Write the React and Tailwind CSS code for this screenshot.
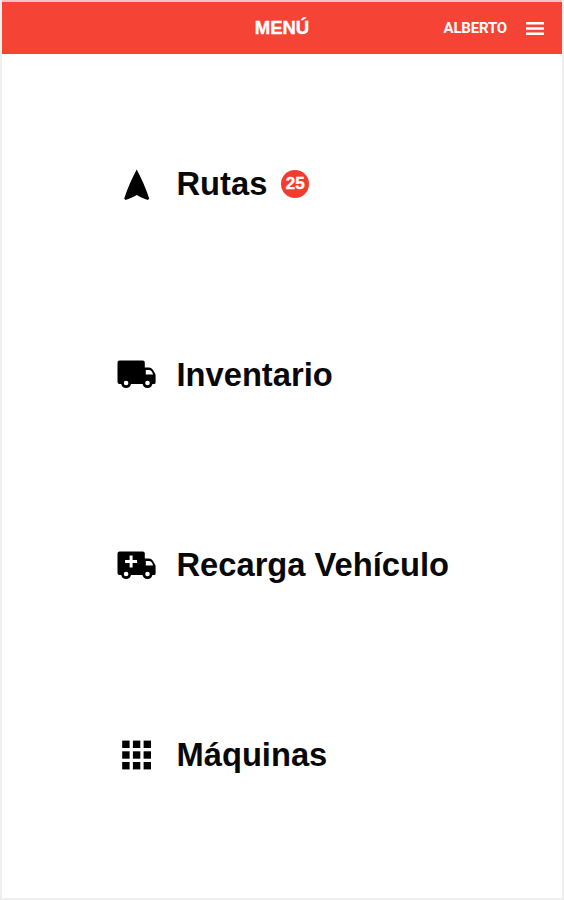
const TRUCK_BODY =
  "M3.500 6.700H26.800Q28.800 6.700 28.800 8.700V13.600H32.300C35.500 13.600 37 15.500 38.200 18L39.600 20.800V28.500Q39.600 30 38.100 30H36.400A5 5 0 0 1 26.600 30H15A5 5 0 0 1 5.200 30H3.500Q1.500 30 1.500 28V8.700Q1.500 6.700 3.500 6.700ZM29.800 16.200V20.500H37.200L35.800 17.700Q35 16.200 33.300 16.200ZM10.100 26.800A2.300 2.300 0 1 0 10.100 31.400A2.300 2.300 0 1 0 10.100 26.800ZM31.500 26.800A2.300 2.300 0 1 0 31.500 31.400A2.300 2.300 0 1 0 31.500 26.800Z";

const CROSS = "M13.600 10.600H16.600V15.100H21.100V18.100H16.600V22.600H13.600V18.100H9.100V15.100H13.600Z";

function NavigateIcon({ className }) {
  return (
    <svg viewBox="0 0 42 42" fill="currentColor" className={className}>
      <path d="M20.700 6.500C25.300 15 29.800 25 33.200 35.600L32 37C28 35.800 24 34 20.700 32C17.400 34 13.400 35.800 9.400 37L8.200 35.600C11.600 25 16.100 15 20.700 6.500Z" />
    </svg>
  );
}

function TruckIcon({ className }) {
  return (
    <svg viewBox="0 -0.9 42 42" fill="currentColor" fillRule="evenodd" className={className}>
      <path d={TRUCK_BODY} />
    </svg>
  );
}

function RefillTruckIcon({ className }) {
  return (
    <svg viewBox="0 -0.9 42 42" fill="currentColor" fillRule="evenodd" className={className}>
      <path d={TRUCK_BODY + CROSS} />
    </svg>
  );
}

function GridIcon({ className }) {
  return (
    <svg viewBox="0 0 42 42" fill="currentColor" className={className}>
      {[6.600, 17.300, 28].map((y) =>
        [6.200, 16.900, 27.600].map((x) => (
          <rect key={`${x}-${y}`} x={x} y={y} width="7.400" height="7.400" />
        ))
      )}
    </svg>
  );
}

function MenuIcon({ className }) {
  return (
    <svg viewBox="0 0 18 13" fill="currentColor" className={className}>
      <path d="M0 0h18v2.500H0zM0 5.250h18v2.500H0zM0 10.500h18V13H0z" />
    </svg>
  );
}

const items = [
  { label: "Rutas", icon: NavigateIcon, badge: 25 },
  { label: "Inventario", icon: TruckIcon },
  { label: "Recarga Vehículo", icon: RefillTruckIcon },
  { label: "Máquinas", icon: GridIcon },
];

export default function App() {
  return (
    <div className="flex h-[900px] w-[564px] flex-col border-x-2 border-b-2 border-[#efefef] bg-white font-['Liberation_Sans',Arial,sans-serif]">
      <header className="grid h-[54px] shrink-0 grid-cols-[1fr_auto_1fr] items-center border-t-2 border-[#f5c4c0] bg-[#f54336] text-white">
        <h1 className="col-start-2 text-[18.500px] font-bold [-webkit-text-stroke:0.4px_white]">
          MENÚ
        </h1>
        <div className="flex items-center justify-end gap-[19px] pr-[18px]">
          <span className="font-[Roboto,sans-serif] text-[15px] font-bold tracking-[-0.200px]">
            ALBERTO
          </span>
          <MenuIcon className="h-[13px] w-[18px]" />
        </div>
      </header>

      <nav className="flex flex-col pt-[34.600px]">
        {items.map(({ label, icon: Icon, badge }) => (
          <a key={label} className="flex h-[190.400px] items-center pl-[114px] text-[#080808]">
            <Icon className="size-[42px] shrink-0 text-black" />
            <span className="ml-[18.500px] text-[32.700px] font-bold">{label}</span>
            {badge ? (
              <span className="ml-[14px] flex size-7 items-center justify-center rounded-full bg-[#f33b2e] text-[17px] font-bold text-white [-webkit-text-stroke:0.4px_white]">
                {badge}
              </span>
            ) : null}
          </a>
        ))}
      </nav>
    </div>
  );
}
